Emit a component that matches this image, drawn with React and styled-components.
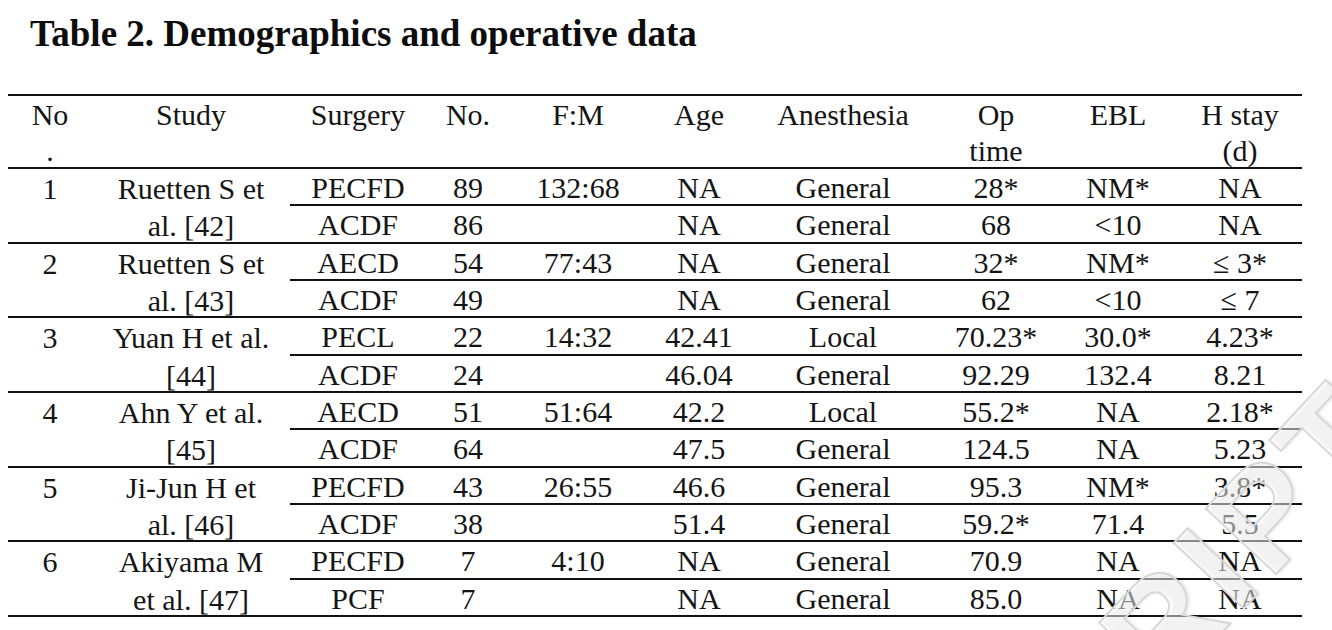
import React from 'react';
import styled, { createGlobalStyle } from 'styled-components';

const GlobalStyle = createGlobalStyle`
  html, body {
    margin: 0;
    padding: 0;
    background: #ffffff;
  }
  body {
    font-family: "Liberation Serif", "Times New Roman", serif;
    color: #151515;
  }
`;

const COLS = '84px 198px 136px 84px 136px 106px 182px 124px 120px 124px';

const headers = [
  ['No', '.'],
  ['Study'],
  ['Surgery'],
  ['No.'],
  ['F:M'],
  ['Age'],
  ['Anesthesia'],
  ['Op', 'time'],
  ['EBL'],
  ['H stay', '(d)'],
];

const studies = [
  {
    no: '1',
    study: ['Ruetten S et', 'al. [42]'],
    fm: '132:68',
    rows: [
      ['PECFD', '89', 'NA', 'General', '28*', 'NM*', 'NA'],
      ['ACDF', '86', 'NA', 'General', '68', '<10', 'NA'],
    ],
  },
  {
    no: '2',
    study: ['Ruetten S et', 'al. [43]'],
    fm: '77:43',
    rows: [
      ['AECD', '54', 'NA', 'General', '32*', 'NM*', '≤ 3*'],
      ['ACDF', '49', 'NA', 'General', '62', '<10', '≤ 7'],
    ],
  },
  {
    no: '3',
    study: ['Yuan H et al.', '[44]'],
    fm: '14:32',
    rows: [
      ['PECL', '22', '42.41', 'Local', '70.23*', '30.0*', '4.23*'],
      ['ACDF', '24', '46.04', 'General', '92.29', '132.4', '8.21'],
    ],
  },
  {
    no: '4',
    study: ['Ahn Y et al.', '[45]'],
    fm: '51:64',
    rows: [
      ['AECD', '51', '42.2', 'Local', '55.2*', 'NA', '2.18*'],
      ['ACDF', '64', '47.5', 'General', '124.5', 'NA', '5.23'],
    ],
  },
  {
    no: '5',
    study: ['Ji-Jun H et', 'al. [46]'],
    fm: '26:55',
    rows: [
      ['PECFD', '43', '46.6', 'General', '95.3', 'NM*', '3.8*'],
      ['ACDF', '38', '51.4', 'General', '59.2*', '71.4', '5.5'],
    ],
  },
  {
    no: '6',
    study: ['Akiyama M', 'et al. [47]'],
    fm: '4:10',
    rows: [
      ['PECFD', '7', 'NA', 'General', '70.9', 'NA', 'NA'],
      ['PCF', '7', 'NA', 'General', '85.0', 'NA', 'NA'],
    ],
  },
];

function App() {
  return (
    <>
      <GlobalStyle />
      <Page>
        <Title>Table 2. Demographics and operative data</Title>
        <Table>
          <HeadRow>
            {headers.map((h, i) => (
              <HeadCell key={i}>
                {h.map((line, j) => (
                  <div key={j}>{line}</div>
                ))}
              </HeadCell>
            ))}
          </HeadRow>
          {studies.map((s) => (
            <Group key={s.no}>
              <SpanCell $col={1}>{s.no}</SpanCell>
              <SpanCell $col={2}>
                {s.study.map((line, j) => (
                  <div key={j}>{line}</div>
                ))}
              </SpanCell>
              {s.rows.map((r, ri) => {
                const cells = [r[0], r[1], ri === 0 ? s.fm : '', ...r.slice(2)];
                return cells.map((c, ci) => (
                  <Cell key={`${ri}-${ci}`} $row={ri + 1} $col={ci + 3} $ruled={ri === 0}>
                    {c}
                  </Cell>
                ));
              })}
            </Group>
          ))}
        </Table>
        <Watermark aria-hidden="true">CRIPT</Watermark>
      </Page>
    </>
  );
}

const Page = styled.div`
  position: relative;
  width: 1332px;
  height: 630px;
  overflow: hidden;
  padding: 0 8px;
  box-sizing: border-box;
`;

const Title = styled.h1`
  margin: 12px 0 38px 22px;
  font-family: "Liberation Serif", "Times New Roman", serif;
  font-weight: 700;
  font-size: 37px;
  line-height: 44px;
  color: #0d0d0d;
  white-space: nowrap;
`;

const Table = styled.div`
  width: 1294px;
  font-size: 30px;
`;

const HeadRow = styled.div`
  display: grid;
  grid-template-columns: ${COLS};
  height: 71px;
  border-top: 2px solid #111;
  border-bottom: 2px solid #111;
`;

const HeadCell = styled.div`
  text-align: center;
  line-height: 36px;
  padding-top: 1px;
  white-space: nowrap;
`;

const Group = styled.div`
  display: grid;
  grid-template-columns: ${COLS};
  grid-template-rows: 37.33px 35.33px;
  border-bottom: 2px solid #111;
`;

const SpanCell = styled.div`
  grid-column: ${(p) => p.$col};
  grid-row: 1 / span 2;
  text-align: center;
  line-height: 37.33px;
  padding-top: 1px;
  white-space: nowrap;
`;

const Cell = styled.div`
  grid-column: ${(p) => p.$col};
  grid-row: ${(p) => p.$row};
  box-sizing: border-box;
  text-align: center;
  line-height: 35.33px;
  padding-top: 1px;
  white-space: nowrap;
  border-bottom: ${(p) => (p.$ruled ? '2px solid #111' : 'none')};
`;

const Watermark = styled.div`
  position: absolute;
  left: 1105px;
  top: 650px;
  font-family: "Liberation Sans", Arial, sans-serif;
  font-weight: 700;
  font-size: 140px;
  line-height: 140px;
  letter-spacing: 8px;
  color: rgba(255, 255, 255, 0.5);
  -webkit-text-stroke: 2px #d8d8d8;
  text-shadow: 2px 2px 3px rgba(0, 0, 0, 0.1);
  transform: rotate(-47deg);
  transform-origin: left bottom;
  pointer-events: none;
  white-space: nowrap;
`;

export default App;
